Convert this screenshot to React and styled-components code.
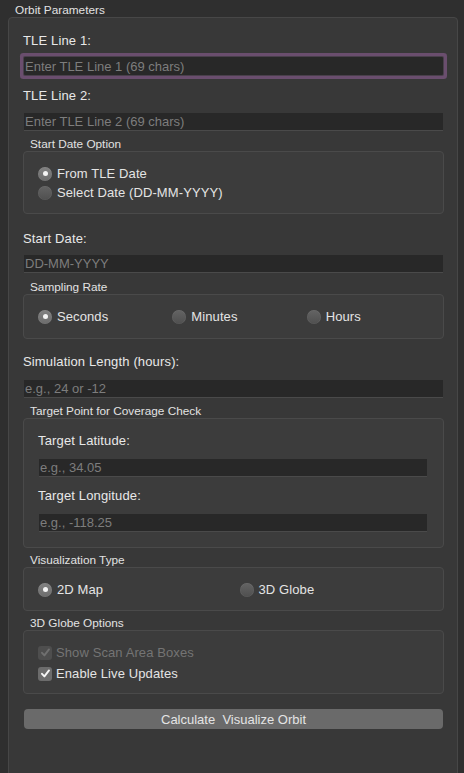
import React from 'react';
import styled, { createGlobalStyle } from 'styled-components';

const GlobalStyle = createGlobalStyle`
  html, body {
    margin: 0;
    padding: 0;
    background: #2f2f2f;
    overflow: hidden;
  }
  body {
    font-family: "Liberation Sans", Arial, sans-serif;
    color: #e6e6e6;
  }
`;

const Page = styled.div`
  width: 464px;
  height: 773px;
  padding: 0 6px 0 8px;
  box-sizing: border-box;
  overflow: hidden;
`;

const GroupTitle = styled.div`
  font-size: 11.8px;
  line-height: 14px;
  color: #e2e2e2;
  padding: 3px 0 0 7px;
`;

const MainBox = styled.div`
  display: flex;
  flex-direction: column;
  background: #383838;
  border: 1px solid #474747;
  border-radius: 4px;
  padding: 15px 13px 80px 14px;
`;

const Label = styled.div`
  font-size: 13px;
  line-height: 16px;
  letter-spacing: 0.15px;
  color: #e8e8e8;
  margin-top: ${p => p.$mt || 0}px;
  padding-left: ${p => p.$inset ? 0 : 0}px;
`;

const Input = styled.input`
  display: block;
  box-sizing: border-box;
  height: 18px;
  margin: ${p => p.$mt || 0}px 1px 0 1px;
  padding: 0 1px;
  border: none;
  border-bottom: 1px solid #4a4a4a;
  background: #282828;
  color: #e6e6e6;
  font-family: "Liberation Sans", Arial, sans-serif;
  font-size: 13px;
  outline: none;
  &::placeholder {
    color: #7d7d7d;
  }
  ${p => p.$focused && `
    border-bottom: none;
    box-shadow: 0 0 0 1px #4a404c, 0 0 0 4px #6a4e6e;
    border-radius: 1px;
  `}
`;

const SubTitle = styled.div`
  font-size: 11.8px;
  line-height: 14px;
  color: #e2e2e2;
  padding-left: 7px;
  margin-top: ${p => p.$mt || 0}px;
`;

const SubBox = styled.div`
  box-sizing: border-box;
  background: #3c3c3c;
  border: 1px solid #4a4a4a;
  border-radius: 4px;
  padding: ${p => p.$pad || '0'};
  height: ${p => p.$h}px;
`;

const RadioColumn = styled.div`
  display: flex;
  flex-direction: column;
  padding-left: 14px;
`;

const RadioGrid = styled.div`
  display: grid;
  grid-template-columns: repeat(${p => p.$cols}, 1fr);
  padding: 0 2px 0 14px;
`;

const OptionRow = styled.label`
  display: flex;
  align-items: center;
  height: ${p => p.$h || 19}px;
  gap: ${p => p.$gap || 5}px;
  font-size: 13px;
  letter-spacing: 0.1px;
  color: ${p => p.$disabled ? '#747474' : '#e4e4e4'};
`;

const RadioDot = styled.span`
  position: relative;
  flex: none;
  width: 14px;
  height: 14px;
  border-radius: 50%;
  box-sizing: border-box;
  background: ${p => p.$checked
    ? 'linear-gradient(#828282, #6c6c6c)'
    : 'linear-gradient(#646464, #4f4f4f)'};
  box-shadow: inset 0 0 0 0.5px rgba(255,255,255,0.08);
  &::after {
    content: '';
    display: ${p => p.$checked ? 'block' : 'none'};
    position: absolute;
    left: 4.5px;
    top: 4.5px;
    width: 5px;
    height: 5px;
    border-radius: 50%;
    background: #f4f4f4;
  }
`;

const CheckBox = styled.span`
  flex: none;
  display: flex;
  align-items: center;
  justify-content: center;
  width: 14px;
  height: 14px;
  border-radius: 3px;
  background: ${p => p.$disabled ? '#4e4e4e' : '#6c6c6c'};
  color: ${p => p.$disabled ? '#707070' : '#f6f6f6'};
`;

const TargetInner = styled.div`
  display: flex;
  flex-direction: column;
  padding: 14px 15px 0 14px;
`;

const Button = styled.button`
  display: block;
  height: 20px;
  margin: 15px 1px 0 1px;
  border: none;
  border-radius: 4px;
  background: #6a6a6a;
  color: #e4e4e4;
  font-family: "Liberation Sans", Arial, sans-serif;
  font-size: 13px;
  white-space: pre;
  padding: 0;
`;

const Radio = ({ checked, children }) => (
  <OptionRow>
    <RadioDot $checked={checked} />
    {children}
  </OptionRow>
);

const Check = ({ disabled, children }) => (
  <OptionRow $disabled={disabled} $h={21} $gap={4}>
    <CheckBox $disabled={disabled}>
      <svg width="11" height="11" viewBox="0 0 11 11">
        <path d="M2 5.8 L4.4 8.4 L9 2.4" fill="none" stroke="currentColor" strokeWidth="1.9" strokeLinecap="round" strokeLinejoin="round" />
      </svg>
    </CheckBox>
    {children}
  </OptionRow>
);

const App = () => (
  <Page>
    <GlobalStyle />
    <GroupTitle>Orbit Parameters</GroupTitle>
    <MainBox>
      <Label>TLE Line 1:</Label>
      <Input $mt={8} $focused placeholder="Enter TLE Line 1 (69 chars)" />
      <Label $mt={13}>TLE Line 2:</Label>
      <Input $mt={9} placeholder="Enter TLE Line 2 (69 chars)" />

      <SubTitle $mt={6}>Start Date Option</SubTitle>
      <SubBox $h={63} $pad="12px 0 0 0">
        <RadioColumn>
          <Radio checked>From TLE Date</Radio>
          <Radio>Select Date (DD-MM-YYYY)</Radio>
        </RadioColumn>
      </SubBox>

      <Label $mt={17}>Start Date:</Label>
      <Input $mt={8} placeholder="DD-MM-YYYY" />

      <SubTitle $mt={7}>Sampling Rate</SubTitle>
      <SubBox $h={45} $pad="12px 0 0 0">
        <RadioGrid $cols={3}>
          <Radio checked>Seconds</Radio>
          <Radio>Minutes</Radio>
          <Radio>Hours</Radio>
        </RadioGrid>
      </SubBox>

      <Label $mt={15}>Simulation Length (hours):</Label>
      <Input $mt={10} placeholder="e.g., 24 or -12" />

      <SubTitle $mt={6}>Target Point for Coverage Check</SubTitle>
      <SubBox $h={130}>
        <TargetInner>
          <Label>Target Latitude:</Label>
          <Input $mt={10} placeholder="e.g., 34.05" />
          <Label $mt={11}>Target Longitude:</Label>
          <Input $mt={10} placeholder="e.g., -118.25" />
        </TargetInner>
      </SubBox>

      <SubTitle $mt={5}>Visualization Type</SubTitle>
      <SubBox $h={44} $pad="12px 0 0 0">
        <RadioGrid $cols={2}>
          <Radio checked>2D Map</Radio>
          <Radio>3D Globe</Radio>
        </RadioGrid>
      </SubBox>

      <SubTitle $mt={5}>3D Globe Options</SubTitle>
      <SubBox $h={64} $pad="11px 0 0 0">
        <RadioColumn>
          <Check disabled>Show Scan Area Boxes</Check>
          <Check>Enable Live Updates</Check>
        </RadioColumn>
      </SubBox>

      <Button>Calculate  Visualize Orbit</Button>
    </MainBox>
  </Page>
);

export default App;
